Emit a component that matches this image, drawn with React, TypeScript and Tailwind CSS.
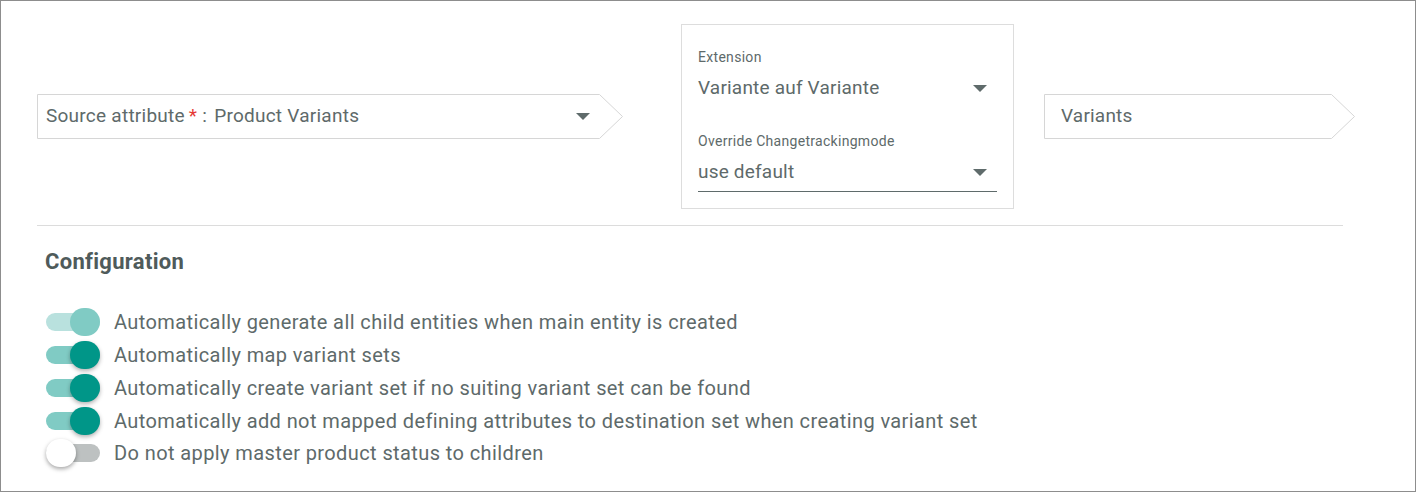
import React from 'react';

const font = { fontFamily: 'Roboto, "Liberation Sans", sans-serif' };

const Caret: React.FC = () => (
  <svg width="14" height="7" viewBox="0 0 14 7" className="shrink-0">
    <polygon points="0,0 14,0 7,7" fill="#5f6b6b" />
  </svg>
);

const ArrowBox: React.FC<{ width: number; children: React.ReactNode; className?: string }> = ({ width, children, className }) => (
  <div className={`relative h-[45px] shrink-0 ${className ?? ''}`} style={{ width }}>
    <svg className="absolute inset-0" width={width} height={45} viewBox={`0 0 ${width} 45`}>
      <polygon
        points={`0.5,0.5 ${width - 23.5},0.5 ${width - 0.5},22.5 ${width - 23.5},44.5 0.5,44.5`}
        fill="white"
        stroke="#d6d6d6"
        strokeWidth="1"
      />
    </svg>
    <div className="relative flex h-full items-center" style={{ paddingRight: 33 }}>{children}</div>
  </div>
);

type ToggleState = 'disabled' | 'on' | 'off';

const toggles: { label: string; state: ToggleState }[] = [
  { label: 'Automatically generate all child entities when main entity is created', state: 'disabled' },
  { label: 'Automatically map variant sets', state: 'on' },
  { label: 'Automatically create variant set if no suiting variant set can be found', state: 'on' },
  { label: 'Automatically add not mapped defining attributes to destination set when creating variant set', state: 'on' },
  { label: 'Do not apply master product status to children', state: 'off' },
];

const Toggle: React.FC<{ state: ToggleState }> = ({ state }) => {
  const track = state === 'disabled' ? 'bg-[#b9e1de]' : state === 'on' ? 'bg-[#80cbc4]' : 'bg-[#bdc1c1]';
  const thumb =
    state === 'disabled'
      ? 'bg-[#80cbc4] left-[24px]'
      : state === 'on'
        ? 'bg-[#009688] left-[24px] shadow-[0_2px_4px_rgba(0,0,0,0.3)]'
        : 'bg-white left-0 shadow-[0_2px_4px_rgba(0,0,0,0.35)]';
  return (
    <div className="relative h-[30px] w-[54px] shrink-0">
      <div className={`absolute left-0 top-[6px] h-[18px] w-[54px] rounded-full ${track}`} />
      <div className={`absolute top-px h-[28px] w-[30px] rounded-full ${thumb}`} />
    </div>
  );
};

export default function App() {
  return (
    <div className="h-[492px] w-[1416px] overflow-hidden border border-[#8d8d8d] bg-white text-[#5e6a6a]" style={font}>
      <div className="pl-[36px] pt-[23px]">
        <div className="flex items-center">
          <ArrowBox width={586}>
            <div className="flex flex-1 items-center pl-[9px] text-[19px] tracking-[0.25px]">
              <span>Source attribute</span>
              <span className="ml-[4px] text-[#e53935]">*</span>
              <span className="ml-[5px]">:</span>
              <span className="ml-[7px]">Product Variants</span>
            </div>
            <Caret />
          </ArrowBox>

          <div className="ml-[58px] w-[333px] shrink-0 border border-[#dddddd] px-[16px] pb-[16px] pt-[24px]">
            <div className="h-[16px] text-[14px] leading-[16px] tracking-[0.3px]">Extension</div>
            <div className="mt-[9px] flex h-[28px] items-center justify-between pr-[10px] text-[19px] tracking-[0.2px]">
              <span>Variante auf Variante</span>
              <Caret />
            </div>
            <div className="mt-[31px] h-[16px] text-[14px] leading-[16px] tracking-[0.3px]">Override Changetrackingmode</div>
            <div className="mt-[9px] border-b border-[#5f6b6b] pb-[5px]">
              <div className="flex h-[28px] items-center justify-between pr-[10px] text-[19px] tracking-[0.2px]">
                <span>use default</span>
                <Caret />
              </div>
            </div>
          </div>

          <ArrowBox width={311} className="ml-[30px]">
            <div className="flex-1 pl-[17px] text-[19px] tracking-[0.2px]">Variants</div>
          </ArrowBox>
        </div>

        <div className="mt-[16px] h-px w-[1306px] bg-[#dcdcdc]" />

        <div className="mt-[22px] h-[28px] pl-[8px] text-[22px] font-bold leading-[28px] tracking-[0.3px] text-[#4f5b5b]">Configuration</div>

        <div className="mt-[30px] pl-[9px]">
          {toggles.map((t) => (
            <div key={t.label} className="flex h-[32.75px] items-center gap-[14px]">
              <Toggle state={t.state} />
              <span className="text-[20px] leading-[24px] tracking-[0.4px]">{t.label}</span>
            </div>
          ))}
        </div>
      </div>
    </div>
  );
}
